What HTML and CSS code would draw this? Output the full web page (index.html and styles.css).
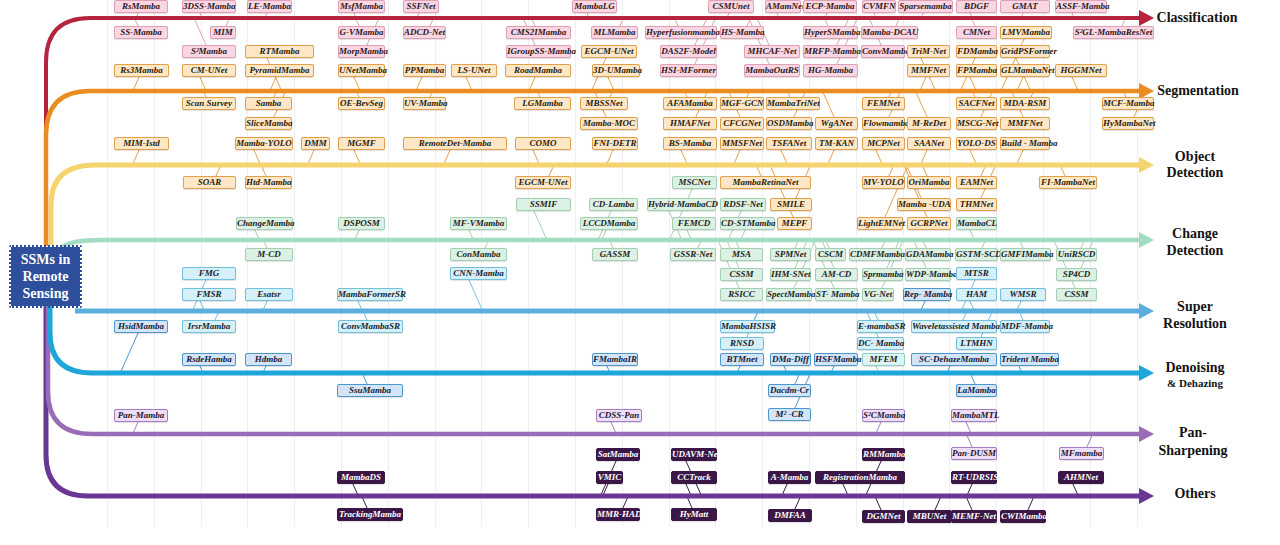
FILE: index.html
```html
<!DOCTYPE html>
<html lang="en">
<head>
<meta charset="utf-8">
<title>SSMs in Remote Sensing</title>
<link rel="stylesheet" href="styles.css">
</head>
<body>
<div class="diagram">
  <svg class="wires" width="1280" height="545" viewBox="0 0 1280 545">
    <path class="ln det" d="M51 245 V205 Q51 165 95 165 H1141"/>
    <path class="ln cls" d="M46 132 V62 Q46 18 90 18 H1141"/>
    <path class="ln seg" d="M46 246 V135 Q46 91 90 91 H1141"/>
    <path class="ln cd" d="M62 247 Q72 240 100 240 H1141"/>
    <path class="ln sr" d="M75 311 H1141"/>
    <path class="ln oth" d="M46 300 V455 Q46 496 88 496 H1141"/>
    <path class="ln pan" d="M48 300 V392 Q48 434 92 434 H1141"/>
    <path class="ln dn" d="M50 300 V333 Q50 373 92 373 H1141"/>
    <path class="hd cls" d="M1139 10 L1154 18 L1139 26Z"/>
    <path class="hd seg" d="M1139 83 L1154 91 L1139 99Z"/>
    <path class="hd det" d="M1139 157 L1154 165 L1139 173Z"/>
    <path class="hd cd" d="M1139 232 L1154 240 L1139 248Z"/>
    <path class="hd sr" d="M1139 303 L1154 311 L1139 319Z"/>
    <path class="hd dn" d="M1139 365 L1154 373 L1139 381Z"/>
    <path class="hd pan" d="M1139 426 L1154 434 L1139 442Z"/>
    <path class="hd oth" d="M1139 488 L1154 496 L1139 504Z"/>
  </svg>

  <div class="root">SSMs in<br>Remote<br>Sensing</div>

  <div class="labels">
    <div class="lab l-cls">Classification</div>
    <div class="lab l-seg">Segmentation</div>
    <div class="lab l-det">Object<br>Detection</div>
    <div class="lab l-cd">Change<br>Detection</div>
    <div class="lab l-sr">Super<br>Resolution</div>
    <div class="lab l-dn">Denoising<br><span class="small">&amp; Dehazing</span></div>
    <div class="lab l-pan">Pan-<br>Sharpening</div>
    <div class="lab l-oth">Others</div>
  </div>

  <!-- Classification -->
  <div class="branch b-cls">
    <div class="t pk u" style="--x:114;--y:-18;--w:54">RsMamba</div>
    <div class="t pk u" style="--x:182;--y:-18;--w:54">3DSS-Mamba</div>
    <div class="t pk u" style="--x:247;--y:-18;--w:45">LE-Mamba</div>
    <div class="t pk u" style="--x:338;--y:-18;--w:47">MsfMamba</div>
    <div class="t pk u" style="--x:403;--y:-18;--w:36">SSFNet</div>
    <div class="t pk u" style="--x:572;--y:-18;--w:45">MambaLG</div>
    <div class="t pk u" style="--x:708;--y:-18;--w:46">CSMUnet</div>
    <div class="t pk u" style="--x:765;--y:-18;--w:36">AMamNet</div>
    <div class="t pk u" style="--x:803;--y:-18;--w:54">ECP-Mamba</div>
    <div class="t pk u" style="--x:862;--y:-18;--w:34">CVMFN</div>
    <div class="t pk u" style="--x:898;--y:-18;--w:55">Sparsemamba</div>
    <div class="t pk u" style="--x:956;--y:-18;--w:41">BDGF</div>
    <div class="t pk u" style="--x:1000;--y:-18;--w:50">GMAT</div>
    <div class="t pk u" style="--x:1055;--y:-18;--w:52">ASSF-Mamba</div>

    <div class="t pk d" style="--x:114;--y:8;--w:54">SS-Mamba</div>
    <div class="t pk d" style="--x:210;--y:8;--w:26">MIM</div>
    <div class="t pk d" style="--x:338;--y:8;--w:47">G-VMamba</div>
    <div class="t pk d" style="--x:403;--y:8;--w:43">ADCD-Net</div>
    <div class="t pk d" style="--x:506;--y:8;--w:65">CMS2IMamba</div>
    <div class="t pk d" style="--x:591;--y:8;--w:47">MLMamba</div>
    <div class="t pk d" style="--x:645;--y:8;--w:72">Hyperfusionmamba</div>
    <div class="t pk d" style="--x:720;--y:8;--w:44">HS-Mamba</div>
    <div class="t pk d" style="--x:803;--y:8;--w:55">HyperSMamba</div>
    <div class="t pk d" style="--x:861;--y:8;--w:57">Mamba-DCAU</div>
    <div class="t pk d" style="--x:956;--y:8;--w:41">CMNet</div>
    <div class="t pk d" style="--x:1073;--y:8;--w:81">S²GL-MambaResNet</div>

    <div class="t pk d" style="--x:182;--y:27;--w:54">S²Mamba</div>
    <div class="t pk d" style="--x:338;--y:27;--w:47">MorpMamba</div>
    <div class="t pk d" style="--x:506;--y:27;--w:65">IGroupSS-Mamba</div>
    <div class="t pk d" style="--x:660;--y:27;--w:57">DAS2F-Model</div>
    <div class="t pk d" style="--x:744;--y:27;--w:56">MHCAF-Net</div>
    <div class="t pk d" style="--x:803;--y:27;--w:55">MRFP-Mamba</div>
    <div class="t pk d" style="--x:861;--y:27;--w:44">ConvMamba</div>

    <div class="t pk d" style="--x:660;--y:46;--w:57">HSI-MFormer</div>
    <div class="t pk d" style="--x:744;--y:46;--w:56">MambaOutRS</div>
    <div class="t pk d" style="--x:803;--y:46;--w:55">HG-Mamba</div>
  </div>

  <!-- Segmentation -->
  <div class="branch b-seg">
    <div class="t or u" style="--x:1000;--y:-65;--w:52">LMVMamba</div>

    <div class="t or u" style="--x:245;--y:-46;--w:69">RTMamba</div>
    <div class="t or u" style="--x:581;--y:-46;--w:56">EGCM-UNet</div>
    <div class="t or u" style="--x:907;--y:-46;--w:43">TriM-Net</div>
    <div class="t or u" style="--x:956;--y:-46;--w:41">FDMamba</div>
    <div class="t or u" style="--x:1000;--y:-46;--w:50">GridPSFormer</div>

    <div class="t or u" style="--x:114;--y:-27;--w:55">Rs3Mamba</div>
    <div class="t or u" style="--x:182;--y:-27;--w:54">CM-UNet</div>
    <div class="t or u" style="--x:245;--y:-27;--w:69">PyramidMamba</div>
    <div class="t or u" style="--x:338;--y:-27;--w:47">UNetMamba</div>
    <div class="t or u" style="--x:403;--y:-27;--w:43">PPMamba</div>
    <div class="t or u" style="--x:451;--y:-27;--w:46">LS-UNet</div>
    <div class="t or u" style="--x:505;--y:-27;--w:66">RoadMamba</div>
    <div class="t or u" style="--x:592;--y:-27;--w:48">3D-UMamba</div>
    <div class="t or u" style="--x:907;--y:-27;--w:43">MMFNet</div>
    <div class="t or u" style="--x:956;--y:-27;--w:41">FPMamba</div>
    <div class="t or u" style="--x:1000;--y:-27;--w:50">GLMambaNet</div>
    <div class="t or u" style="--x:1055;--y:-27;--w:52">HGGMNet</div>

    <div class="t or d" style="--x:182;--y:6;--w:54">Scan Survey</div>
    <div class="t or d" style="--x:245;--y:6;--w:47">Samba</div>
    <div class="t or d" style="--x:338;--y:6;--w:47">OE-BevSeg</div>
    <div class="t or d" style="--x:403;--y:6;--w:43">UV-Mamba</div>
    <div class="t or d" style="--x:514;--y:6;--w:57">LGMamba</div>
    <div class="t or d" style="--x:580;--y:6;--w:48">MBSSNet</div>
    <div class="t or d" style="--x:663;--y:6;--w:54">AFAMamba</div>
    <div class="t or d" style="--x:720;--y:6;--w:44">MGF-GCN</div>
    <div class="t or d" style="--x:766;--y:6;--w:54">MambaTriNet</div>
    <div class="t or d" style="--x:862;--y:6;--w:43">FEMNet</div>
    <div class="t or d" style="--x:956;--y:6;--w:41">SACFNet</div>
    <div class="t or d" style="--x:1000;--y:6;--w:50">MDA-RSM</div>
    <div class="t or d" style="--x:1102;--y:6;--w:52">MCF-Mamba</div>

    <div class="t or d" style="--x:245;--y:26;--w:47">SliceMamba</div>
    <div class="t or d" style="--x:580;--y:26;--w:58">Mamba-MOC</div>
    <div class="t or d" style="--x:663;--y:26;--w:54">HMAFNet</div>
    <div class="t or d" style="--x:720;--y:26;--w:44">CFCGNet</div>
    <div class="t or d" style="--x:766;--y:26;--w:46">OSDMamba</div>
    <div class="t or d" style="--x:815;--y:26;--w:43">WgANet</div>
    <div class="t or d" style="--x:862;--y:26;--w:43">Flowmamba</div>
    <div class="t or d" style="--x:907;--y:26;--w:44">M-ReDet</div>
    <div class="t or d" style="--x:956;--y:26;--w:41">MSCG-Net</div>
    <div class="t or d" style="--x:1000;--y:26;--w:50">MMFNet</div>
    <div class="t or d" style="--x:1102;--y:26;--w:52">HyMambaNet</div>
  </div>

  <!-- Object detection -->
  <div class="branch b-det">
    <div class="t or u" style="--x:114;--y:-28;--w:55">MIM-Istd</div>
    <div class="t or u" style="--x:235;--y:-28;--w:58">Mamba-YOLO</div>
    <div class="t or u" style="--x:301;--y:-28;--w:29">DMM</div>
    <div class="t or u" style="--x:338;--y:-28;--w:47">MGMF</div>
    <div class="t or u" style="--x:403;--y:-28;--w:104">RemoteDet-Mamba</div>
    <div class="t or u" style="--x:515;--y:-28;--w:56">COMO</div>
    <div class="t or u" style="--x:592;--y:-28;--w:46">FNI-DETR</div>
    <div class="t or u" style="--x:663;--y:-28;--w:54">BS-Mamba</div>
    <div class="t or u" style="--x:720;--y:-28;--w:44">MMSFNet</div>
    <div class="t or u" style="--x:766;--y:-28;--w:46">TSFANet</div>
    <div class="t or u" style="--x:815;--y:-28;--w:43">TM-KAN</div>
    <div class="t or u" style="--x:862;--y:-28;--w:43">MCPNet</div>
    <div class="t or u" style="--x:907;--y:-28;--w:44">SAANet</div>
    <div class="t or u" style="--x:956;--y:-28;--w:41">YOLO-DS</div>
    <div class="t or u" style="--x:1000;--y:-28;--w:50">Build - Mamba</div>

    <div class="t or d" style="--x:183;--y:11;--w:53">SOAR</div>
    <div class="t or d" style="--x:245;--y:11;--w:47">Htd-Mamba</div>
    <div class="t or d" style="--x:515;--y:11;--w:56">EGCM-UNet</div>
    <div class="t or d" style="--x:720;--y:11;--w:91">MambaRetinaNet</div>
    <div class="t or d" style="--x:862;--y:11;--w:43">MV-YOLO</div>
    <div class="t or d" style="--x:907;--y:11;--w:44">OriMamba</div>
    <div class="t or d" style="--x:956;--y:11;--w:41">EAMNet</div>
    <div class="t or d" style="--x:1039;--y:11;--w:58">FI-MambaNet</div>

    <div class="t or d" style="--x:770;--y:33;--w:42">SMILE</div>
    <div class="t or d" style="--x:897;--y:33;--w:54">Mamba -UDA</div>
    <div class="t or d" style="--x:956;--y:33;--w:41">THMNet</div>

    <div class="t or d" style="--x:777;--y:52;--w:35">MEPF</div>
    <div class="t or d" style="--x:857;--y:52;--w:46">LightEMNet</div>
    <div class="t or d" style="--x:907;--y:52;--w:44">GCRPNet</div>
  </div>

  <!-- Change detection -->
  <div class="branch b-cd">
    <div class="t gr u" style="--x:672;--y:-64;--w:45">MSCNet</div>

    <div class="t gr u" style="--x:516;--y:-42;--w:55">SSMIF</div>
    <div class="t gr u" style="--x:589;--y:-42;--w:49">CD-Lamba</div>
    <div class="t gr u" style="--x:647;--y:-42;--w:69">Hybrid-MambaCD</div>
    <div class="t gr u" style="--x:720;--y:-42;--w:46">RDSF-Net</div>

    <div class="t gr u" style="--x:236;--y:-23;--w:57">ChangeMamba</div>
    <div class="t gr u" style="--x:338;--y:-23;--w:47">DSPOSM</div>
    <div class="t gr u" style="--x:450;--y:-23;--w:57">MF-VMamba</div>
    <div class="t gr u" style="--x:580;--y:-23;--w:58">LCCDMamba</div>
    <div class="t gr u" style="--x:672;--y:-23;--w:44">FEMCD</div>
    <div class="t gr u" style="--x:720;--y:-23;--w:55">CD-STMamba</div>
    <div class="t gr u" style="--x:956;--y:-23;--w:41">MambaCL</div>

    <div class="t gr d" style="--x:245;--y:8;--w:48">M-CD</div>
    <div class="t gr d" style="--x:450;--y:8;--w:57">ConMamba</div>
    <div class="t gr d" style="--x:592;--y:8;--w:46">GASSM</div>
    <div class="t gr d" style="--x:670;--y:8;--w:46">GSSR-Net</div>
    <div class="t gr d" style="--x:720;--y:8;--w:43">MSA</div>
    <div class="t gr d" style="--x:770;--y:8;--w:41">SPMNet</div>
    <div class="t gr d" style="--x:815;--y:8;--w:31">CSCM</div>
    <div class="t gr d" style="--x:849;--y:8;--w:53">CDMFMamba</div>
    <div class="t gr d" style="--x:905;--y:8;--w:46">GDAMamba</div>
    <div class="t gr d" style="--x:955;--y:8;--w:43">GSTM-SCD</div>
    <div class="t gr d" style="--x:1000;--y:8;--w:51">GMFIMamba</div>
    <div class="t gr d" style="--x:1056;--y:8;--w:41">UniRSCD</div>

    <div class="t gr d" style="--x:720;--y:28;--w:43">CSSM</div>
    <div class="t gr d" style="--x:770;--y:28;--w:41">IHM-SNet</div>
    <div class="t gr d" style="--x:815;--y:28;--w:43">AM-CD</div>
    <div class="t gr d" style="--x:862;--y:28;--w:41">Sprmamba</div>
    <div class="t gr d" style="--x:905;--y:28;--w:46">WDP-Mamba</div>
    <div class="t gr d" style="--x:1056;--y:28;--w:41">SP4CD</div>

    <div class="t gr d" style="--x:720;--y:48;--w:43">RSICC</div>
    <div class="t gr d" style="--x:766;--y:48;--w:46">SpectMamba</div>
    <div class="t gr d" style="--x:815;--y:48;--w:43">ST- Mamba</div>
    <div class="t gr d" style="--x:862;--y:48;--w:32">VG-Net</div>
    <div class="t gr d" style="--x:1056;--y:48;--w:41">CSSM</div>
  </div>

  <!-- Super resolution -->
  <div class="branch b-sr">
    <div class="t lb u" style="--x:182;--y:-44;--w:54">FMG</div>
    <div class="t lb u" style="--x:450;--y:-44;--w:57">CNN-Mamba</div>
    <div class="t lb u" style="--x:956;--y:-44;--w:41">MTSR</div>

    <div class="t lb u" style="--x:182;--y:-23;--w:54">FMSR</div>
    <div class="t lb u" style="--x:245;--y:-23;--w:48">Esatsr</div>
    <div class="t lb u" style="--x:337;--y:-23;--w:66">MambaFormerSR</div>
    <div class="t bl u" style="--x:903;--y:-23;--w:48">Rep- Mamba</div>
    <div class="t lb u" style="--x:956;--y:-23;--w:41">HAM</div>
    <div class="t lb u" style="--x:1000;--y:-23;--w:46">WMSR</div>

    <div class="t lb d" style="--x:182;--y:9;--w:54">IrsrMamba</div>
    <div class="t lb d" style="--x:338;--y:9;--w:65">ConvMambaSR</div>
    <div class="t lb d" style="--x:720;--y:9;--w:55">MambaHSISR</div>
    <div class="t lb d" style="--x:857;--y:9;--w:47">E-mambaSR</div>
    <div class="t lb d" style="--x:911;--y:9;--w:86">Waveletassisted Mamba</div>
    <div class="t lb d" style="--x:1000;--y:9;--w:50">MDF-Mamba</div>

    <div class="t lb d" style="--x:720;--y:26;--w:44">RNSD</div>
    <div class="t lb d" style="--x:857;--y:26;--w:47">DC- Mamba</div>
    <div class="t lb d" style="--x:956;--y:26;--w:41">LTMHN</div>
  </div>

  <!-- Denoising & Dehazing -->
  <div class="branch b-dn">
    <div class="t bl u" style="--x:114;--y:-53;--w:54">HsidMamba</div>

    <div class="t bl u" style="--x:182;--y:-20;--w:54">RsdeHamba</div>
    <div class="t bl u" style="--x:245;--y:-20;--w:47">Hdmba</div>
    <div class="t bl u" style="--x:592;--y:-20;--w:46">FMambaIR</div>
    <div class="t bl u" style="--x:720;--y:-20;--w:44">BTMnet</div>
    <div class="t bl u" style="--x:770;--y:-20;--w:41">DMa-Diff</div>
    <div class="t bl u" style="--x:814;--y:-20;--w:44">HSFMamba</div>
    <div class="t cy u" style="--x:862;--y:-20;--w:43">MFEM</div>
    <div class="t bl u" style="--x:911;--y:-20;--w:86">SC-DehazeMamba</div>
    <div class="t bl u" style="--x:1000;--y:-20;--w:59">Trident Mamba</div>

    <div class="t bl d" style="--x:337;--y:11;--w:66">SsuMamba</div>
    <div class="t bl d" style="--x:768;--y:11;--w:43">Dacdm-Cr</div>
    <div class="t bl d" style="--x:956;--y:11;--w:41">LaMamba</div>

    <div class="t bl d" style="--x:768;--y:35;--w:43">M² -CR</div>
  </div>

  <!-- Pan-sharpening -->
  <div class="branch b-pan">
    <div class="t lp u" style="--x:114;--y:-25;--w:54">Pan-Mamba</div>
    <div class="t lp u" style="--x:596;--y:-25;--w:46">CDSS-Pan</div>
    <div class="t lp u" style="--x:862;--y:-25;--w:43">S²CMamba</div>
    <div class="t lp u" style="--x:951;--y:-25;--w:46">MambaMTL</div>

    <div class="t lp d" style="--x:951;--y:13;--w:46">Pan-DUSM</div>
    <div class="t lp d" style="--x:1059;--y:13;--w:45">MFmamba</div>
  </div>

  <!-- Others -->
  <div class="branch b-oth">
    <div class="t dk u" style="--x:596;--y:-48;--w:44">SatMamba</div>
    <div class="t dk u" style="--x:671;--y:-48;--w:46">UDAVM-Net</div>
    <div class="t dk u" style="--x:862;--y:-48;--w:43">RMMamba</div>

    <div class="t dk u" style="--x:337;--y:-25;--w:48">MambaDS</div>
    <div class="t dk u" style="--x:596;--y:-25;--w:27">VMIC</div>
    <div class="t dk u" style="--x:671;--y:-25;--w:46">CCTrack</div>
    <div class="t dk u" style="--x:768;--y:-25;--w:43">A-Mamba</div>
    <div class="t dk u" style="--x:815;--y:-25;--w:90">RegistrationMamba</div>
    <div class="t dk u" style="--x:951;--y:-25;--w:46">RT-UDRSIS</div>
    <div class="t dk u" style="--x:1058;--y:-25;--w:46">AHMNet</div>

    <div class="t dk d" style="--x:337;--y:12;--w:66">TrackingMamba</div>
    <div class="t dk d" style="--x:596;--y:12;--w:44">MMR-HAD</div>
    <div class="t dk d" style="--x:671;--y:12;--w:46">HyMatt</div>
    <div class="t dk d" style="--x:768;--y:13;--w:44">DMFAA</div>
    <div class="t dk d" style="--x:862;--y:14;--w:43">DGMNet</div>
    <div class="t dk d" style="--x:907;--y:14;--w:45">MBUNet</div>
    <div class="t dk d" style="--x:951;--y:14;--w:46">MEMF-Net</div>
    <div class="t dk d" style="--x:1000;--y:14;--w:46">CWIMamba</div>
  </div>
</div>
</body>
</html>
```

FILE: styles.css
```css
html, body {
  margin: 0;
  padding: 0;
  background: #ffffff;
}

.diagram {
  position: relative;
  z-index: 0;
  width: 1280px;
  height: 545px;
  overflow: hidden;
  font-family: "Liberation Serif", "Times New Roman", serif;
  background-color: #ffffff;
  background-image: repeating-linear-gradient(90deg, #efefef 0 1px, transparent 1px 46.8px);
  background-position: 107px 0;
  background-size: 1060px 527px;
  background-repeat: no-repeat;
}

/* main branch wires */
.wires {
  position: absolute;
  left: 0;
  top: 0;
}
.ln { fill: none; stroke-width: 4.5; stroke-linecap: butt; }
.ln.cls { stroke: #b5233f; stroke-width: 4; }
.ln.seg { stroke: #ea8c21; stroke-width: 4.5; }
.ln.det { stroke: #f6d46d; stroke-width: 5; }
.ln.cd  { stroke: #a3dbc3; stroke-width: 4.5; }
.ln.sr  { stroke: #5cafdc; stroke-width: 5; }
.ln.dn  { stroke: #1ea5d9; stroke-width: 5; }
.ln.pan { stroke: #9a6cb8; stroke-width: 4.5; }
.ln.oth { stroke: #6a3795; stroke-width: 5; }
.hd.cls { fill: #b5233f; }
.hd.seg { fill: #ea8c21; }
.hd.det { fill: #f6d46d; }
.hd.cd  { fill: #a3dbc3; }
.hd.sr  { fill: #5cafdc; }
.hd.dn  { fill: #1ea5d9; }
.hd.pan { fill: #9a6cb8; }
.hd.oth { fill: #6a3795; }

/* root node */
.root {
  position: absolute;
  left: 9px;
  top: 245px;
  width: 73px;
  height: 63px;
  box-sizing: border-box;
  border: 2px dotted #2c4d98;
  background: #2e4f9b;
  background-clip: padding-box;
  border-radius: 2px;
  color: #ffffff;
  font-weight: bold;
  font-size: 14px;
  line-height: 17px;
  text-align: center;
  display: flex;
  align-items: center;
  justify-content: center;
}

/* right-hand labels */
.labels {
  position: absolute;
  left: 1150px;
  top: 0;
  width: 90px;
  height: 545px;
}
.lab {
  position: absolute;
  left: 0;
  width: 90px;
  text-align: center;
  font-weight: bold;
  font-size: 14px;
  line-height: 16px;
  color: #141414;
}
.l-cls { top: 10px; left: 2px; }
.l-seg { top: 83px; left: 3px; }
.l-det { top: 149px; }
.l-cd  { top: 225px; line-height: 17px; }
.l-sr  { top: 298px; line-height: 17px; }
.l-dn  { top: 360px; line-height: 15px; }
.l-dn .small { font-size: 11px; }
.l-pan { top: 424px; line-height: 18px; left: -2px; }
.l-oth { top: 486px; }

/* branch groups: origin sits on the branch wire */
.branch {
  position: absolute;
  left: 0;
  width: 0;
  height: 0;
}
.b-cls { top: 18px; }
.b-seg { top: 91px; }
.b-det { top: 165px; }
.b-cd  { top: 240px; }
.b-sr  { top: 311px; }
.b-dn  { top: 373px; }
.b-pan { top: 434px; }
.b-oth { top: 496px; }

/* method tags */
.t {
  position: absolute;
  left: calc(var(--x) * 1px);
  top: calc(var(--y) * 1px);
  width: calc(var(--w) * 1px);
  height: 13px;
  box-sizing: border-box;
  border: 1px solid var(--bc);
  border-radius: 2px;
  background: var(--bg);
  color: #1e1a22;
  font-style: italic;
  font-weight: bold;
  font-size: 9px;
  line-height: 11px;
  text-align: center;
  white-space: nowrap;
  box-shadow: 0 0.5px 1px rgba(0, 0, 0, 0.12);
}

/* leader from tag to its branch wire */
.t::after {
  content: "";
  position: absolute;
  left: 45%;
  width: 1px;
  background: var(--bc);
  z-index: -1;
}
.u::after {
  top: 100%;
  height: calc((-13 - var(--y)) * 1px);
  transform-origin: top;
  transform: skewX(-24deg);
}
.d::after {
  bottom: 100%;
  height: calc(var(--y) * 1px);
  transform-origin: bottom;
  transform: skewX(24deg);
}
.u:nth-child(even)::after { transform: skewX(24deg); left: 30%; }
.d:nth-child(even)::after { transform: skewX(-24deg); left: 60%; }

.pk { --bg: #f9d6e1; --bc: #e0a0b5; color: #2e1822; }
.or { --bg: #fde7c6; --bc: #e3a04b; color: #2a1d0c; }
.gr { --bg: #ddf0e4; --bc: #a3d0b3; color: #1a2620; }
.lb { --bg: #d6f0f7; --bc: #72c0db; color: #17232e; }
.bl { --bg: #d2e4f6; --bc: #4b98cf; color: #172038; }
.cy { --bg: #def4f2; --bc: #8ccfca; color: #172727; }
.lp { --bg: #efdff6; --bc: #a27dc3; color: #24152e; }
.dk { --bg: #3b1747; --bc: #3b1747; color: #ffffff; }
```
